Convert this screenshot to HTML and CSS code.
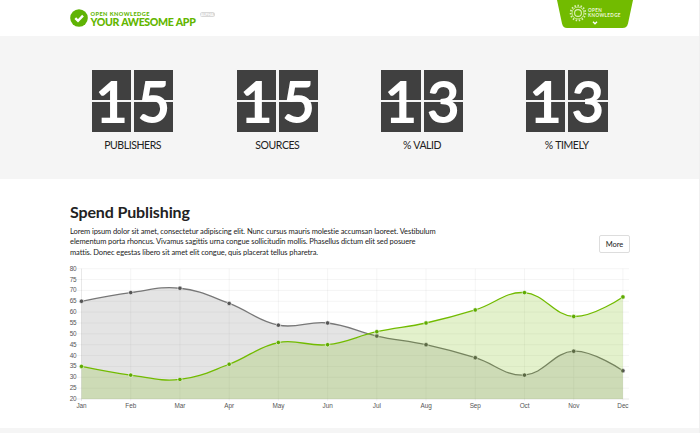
FILE: index.html
```html
<!DOCTYPE html>
<html lang="en">
<head>
<meta charset="utf-8">
<title>Your Awesome App</title>
<link rel="stylesheet" href="styles.css">
</head>
<body>
<header class="header">
  <a class="brand">
    <svg class="brand-mark" viewBox="0 0 18 18"><circle cx="9" cy="9" r="8.800" fill="#5fb304"/><path d="M5.300 9.200l2.700 2.600 5-5.200" fill="none" stroke="#fff" stroke-width="2.400"/></svg>
    <span class="brand-text"><span class="brand-org">OPEN KNOWLEDGE</span><span class="brand-name">YOUR AWESOME APP</span></span>
    <span class="badge">ALPHA</span>
  </a>
  <a class="ribbon">
    <svg class="ribbon-shape" viewBox="0 0 76 28"><path d="M0 0H76L71 23.500Q70 28 65.500 28H10Q6 28 5 23.500Z" fill="#72bb00"/></svg>
    <span class="ribbon-content">
      <svg class="gear" viewBox="0 0 18 18" fill="none" stroke="#dcf0b8"><circle cx="9" cy="9" r="3.400" stroke-width="1.100"/><circle cx="9" cy="9" r="6" stroke-width=".8"/><circle cx="9" cy="9" r="7.400" stroke-width="1.800" stroke-dasharray="1.500 1.600"/></svg>
      <span class="ribbon-text">OPEN<br>KNOWLEDGE</span>
    </span>
    <svg class="chevron" viewBox="0 0 6 4"><path d="M1 .8l2 2 2-2" fill="none" stroke="#fff" stroke-width="1.300"/></svg>
  </a>
</header>
<section class="stats">
  <div class="stat"><div class="flip"><span class="card">1</span><span class="card">5</span></div><div class="label">PUBLISHERS</div></div>
  <div class="stat"><div class="flip"><span class="card">1</span><span class="card">5</span></div><div class="label">SOURCES</div></div>
  <div class="stat"><div class="flip"><span class="card">1</span><span class="card">3</span></div><div class="label">% VALID</div></div>
  <div class="stat"><div class="flip"><span class="card">1</span><span class="card">3</span></div><div class="label">% TIMELY</div></div>
</section>
<main class="publishing">
  <h2>Spend Publishing</h2>
  <div class="intro">
    <p>Lorem ipsum dolor sit amet, consectetur adipiscing elit. Nunc cursus mauris molestie accumsan laoreet. Vestibulum<br>elementum porta rhoncus. Vivamus sagittis urna congue sollicitudin mollis. Phasellus dictum elit sed posuere<br>mattis. Donec egestas libero sit amet elit congue, quis placerat tellus pharetra.</p>
    <a class="more">More</a>
  </div>
  <svg class="chart" id="chart" viewBox="0 0 570 150"></svg>
</main>
<footer class="footer"></footer>
<script src="chart.js"></script>
</body>
</html>
```
FILE: styles.css
```css
* { box-sizing: border-box; }
body {
  margin: 0;
  width: 700px;
  height: 433px;
  overflow: hidden;
  display: flex;
  flex-direction: column;
  border-right: 1px solid #f0f0f0;
  background: #fff;
  color: #222;
  font-family: Lato, "Liberation Sans", sans-serif;
}
.header {
  height: 36px;
  flex: none;
  display: flex;
  justify-content: space-between;
  padding: 0 66px 0 70px;
}
.brand { display: flex; padding-top: 9px; }
.brand-mark { width: 18px; height: 18px; }
.brand-text { display: flex; flex-direction: column; width: 105px; margin-left: 2.5px; color: #63b600; white-space: nowrap; }
.brand-org { font-size: 5.6px; line-height: 6px; font-weight: 900; letter-spacing: .45px; margin-top: 2px; }
.brand-name { font-size: 10.6px; line-height: 11px; font-weight: 900; letter-spacing: -.36px; word-spacing: .5px; }
.badge {
  width: 15px;
  height: 5px;
  margin: 3px 0 0 4px;
  border-radius: 2.5px;
  background: #d8d8d8;
  color: #fff;
  font-size: 4px;
  line-height: 5px;
  font-weight: 700;
  text-align: center;
}
.ribbon { position: relative; width: 76px; height: 28px; }
.ribbon-shape { display: block; width: 76px; height: 28px; }
.ribbon-content { position: absolute; left: 11.5px; top: 4px; display: flex; align-items: center; }
.gear { width: 18px; height: 18px; }
.ribbon-text { margin-left: 1.5px; color: #eef8dc; font-size: 4.6px; line-height: 4.8px; font-weight: 700; letter-spacing: .35px; }
.chevron { position: absolute; left: 34.5px; top: 21px; width: 6px; height: 4px; }
.stats {
  height: 143px;
  flex: none;
  display: grid;
  grid-template-columns: repeat(4, 144.7px);
  padding: 33.5px 0 0 60.3px;
  background: #f5f5f5;
}
.stat { text-align: center; }
.flip { display: flex; justify-content: center; gap: 3px; }
.card {
  width: 39.3px;
  height: 62.5px;
  background: linear-gradient(#404040 30px, #f5f5f5 30px, #f5f5f5 32px, #404040 32px);
  color: #fff;
  font-size: 57px;
  line-height: 62px;
  font-weight: 700;
}
.label { margin-top: 5.5px; font-size: 10.5px; line-height: 14px; letter-spacing: -.43px; word-spacing: .5px; }
.publishing { height: 249px; flex: none; padding: 22px 69px 0 70px; }
h2 { margin: 0; font-size: 16px; line-height: 22px; font-weight: 700; letter-spacing: -.13px; }
.intro { display: flex; justify-content: space-between; margin-top: 3px; height: 32px; }
p { margin: 0; padding-top: .6px; font-size: 7.5px; line-height: 10.7px; letter-spacing: -.085px; white-space: nowrap; }
.more {
  width: 31px;
  height: 18px;
  margin-top: 9px;
  border: 1px solid #ddd;
  border-radius: 2px;
  font-size: 7.5px;
  line-height: 17px;
  text-align: center;
}
.chart { display: block; width: 570px; height: 150px; margin: 6px 0 0 -5px; }
.grid { stroke: #000; stroke-opacity: .045; stroke-width: 1; }
.axis { stroke: #000; stroke-opacity: .09; stroke-width: 1; }
.tick { fill: #555; font: 6.4px "Liberation Sans", Arial, sans-serif; letter-spacing: -.08px; }
.line { fill: none; stroke-width: 1.3; }
.area.green { fill: #72bb00; fill-opacity: .2; }
.area.gray { fill: #777; fill-opacity: .2; }
.line.green { stroke: #72bb00; }
.line.gray { stroke: #777; }
.dot { stroke: #fff; stroke-width: .6; }
.dot.green { fill: #5eaa00; }
.dot.gray { fill: #555; }
.footer { height: 5px; flex: none; background: #f5f5f5; }
```
FILE: chart.js
```js
const chart = document.getElementById("chart");
const months = ["Jan", "Feb", "Mar", "Apr", "May", "Jun", "Jul", "Aug", "Sep", "Oct", "Nov", "Dec"];
const series = [
  { name: "green", values: [35, 31, 29, 36, 46, 45, 51, 55, 61, 69, 58, 67] },
  { name: "gray", values: [65, 69, 71, 64, 54, 55, 49, 45, 39, 31, 42, 33] }
];
const left = 16.5, step = 49.22, top0 = 4.7, bottom = 135;
const xAt = i => left + i * step;
const yAt = v => bottom - (v - 20) * (bottom - top0) / 60;

function add(tag, attrs, text) {
  const el = document.createElementNS("http://www.w3.org/2000/svg", tag);
  for (const k in attrs) el.setAttribute(k, attrs[k]);
  if (text !== undefined) el.textContent = text;
  chart.appendChild(el);
}

// Smooth curve through the points, with flat handles at both ends.
function curve(pts) {
  const handles = pts.map((p, i) => {
    const a = pts[i - 1], b = pts[i + 1];
    if (!a || !b) return { inn: p, out: p };
    const d1 = Math.hypot(p[0] - a[0], p[1] - a[1]);
    const d2 = Math.hypot(b[0] - p[0], b[1] - p[1]);
    const f1 = 0.4 * d1 / (d1 + d2), f2 = 0.4 * d2 / (d1 + d2);
    const dx = b[0] - a[0], dy = b[1] - a[1];
    return { inn: [p[0] - f1 * dx, p[1] - f1 * dy], out: [p[0] + f2 * dx, p[1] + f2 * dy] };
  });
  return pts.map((p, i) => i === 0 ? `M${p}` : `C${handles[i - 1].out} ${handles[i].inn} ${p}`).join("");
}

for (let v = 20; v <= 80; v += 5) {
  add("line", { class: v === 20 ? "axis" : "grid", x1: left - 5, x2: 564, y1: yAt(v), y2: yAt(v) });
  add("text", { class: "tick", x: 11.6, y: yAt(v) + 2, "text-anchor": "end" }, v);
}
months.forEach((m, i) => {
  add("line", { class: i ? "grid" : "axis", x1: xAt(i), x2: xAt(i), y1: top0, y2: bottom + 2 });
  add("text", { class: "tick", x: xAt(i), y: 144.3, "text-anchor": "middle" }, m);
});
for (const s of [series[1], series[0]]) {
  const pts = s.values.map((v, i) => [xAt(i), yAt(v)]);
  const d = curve(pts);
  add("path", { class: "area " + s.name, d: `${d}L${xAt(11)},${bottom}L${left},${bottom}Z` });
  add("path", { class: "line " + s.name, d });
  for (const [cx, cy] of pts) add("circle", { class: "dot " + s.name, cx, cy, r: 2.2 });
}
```
